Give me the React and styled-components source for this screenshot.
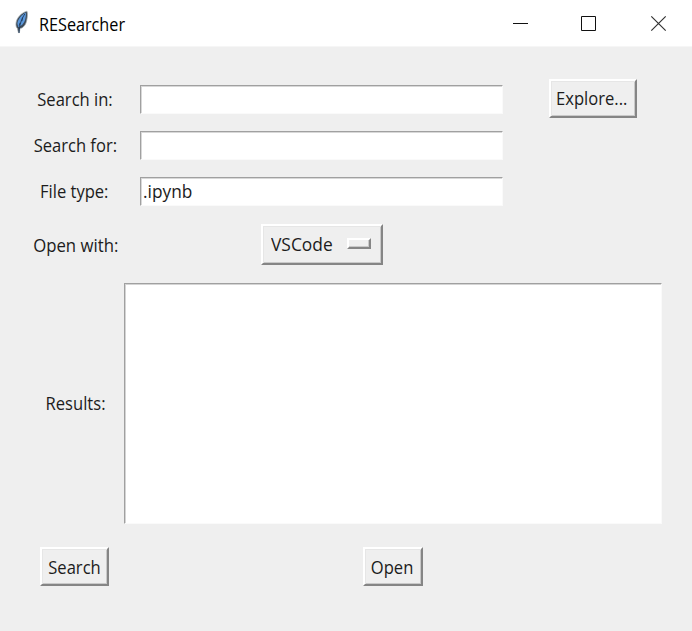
import React from "react";
import styled, { createGlobalStyle } from "styled-components";

const Global = createGlobalStyle`
  * { box-sizing: border-box; }
  body { margin: 0; background: #efefef; }
`;

const Window = styled.div`
  width: 692px;
  height: 631px;
  overflow: hidden;
  display: flex;
  flex-direction: column;
  background: #efefef;
  color: #1c1c1c;
  font: 18px/24px "Open Sans", "Noto Sans", sans-serif;
`;

const TitleBar = styled.header`
  height: 47px;
  flex: none;
  display: flex;
  align-items: flex-start;
  background: #fff;
  border-bottom: 1px solid #f6f6f6;
`;

const Feather = styled.svg`
  width: 18px;
  height: 26px;
  margin: 9px 8px 0 13px;
`;

const Title = styled.h1`
  flex: 1;
  margin: 12px 0 0;
  font-size: 18px;
  font-weight: 400;
  color: #000;
`;

const Controls = styled.div`
  display: flex;
  height: 46px;
`;

const ControlIcon = styled.svg`
  width: 69px;
  height: 46px;
  fill: none;
  stroke: ${(p) => p.$tone || "#111"};
  stroke-width: ${(p) => p.$weight || 1};
`;

const Text = styled.span`
  display: inline-block;
  white-space: nowrap;
  transform: scaleX(${(p) => p.$fit || 0.92});
  transform-origin: ${(p) => (p.$start ? "left" : "center")};
`;

const Form = styled.main`
  display: grid;
  grid-template-columns: 96px 395px 147px;
  grid-template-rows: 46px 46px 46px 61px 257px 70px;
  padding: 29px 0 0 28px;
  align-items: center;
  justify-items: center;
`;

const Label = styled.label`
  display: flex;
  justify-content: center;
  width: 96px;
  padding: 0 ${(p) => p.$shift ?? 2}px ${(p) => p.$lift || 0}px 0;
`;

const Entry = styled.div`
  width: 363px;
  height: 29px;
  display: flex;
  align-items: center;
  padding: 0 0 0 2px;
  background: #fff;
  border: 1px solid;
  border-color: #a0a0a0 #fafafa #fafafa #a0a0a0;
  box-shadow: inset 1px 1px #d8d8d8;
`;

const Button = styled.button`
  width: ${(p) => p.$width}px;
  height: ${(p) => p.$height || 39}px;
  display: flex;
  align-items: center;
  justify-content: center;
  margin: 0 0 ${(p) => p.$lift ?? 2}px;
  padding: ${(p) => p.$drop || 0}px 1px 0 0;
  background: #efefef;
  border: 2px solid;
  border-color: #fff #858585 #858585 #fff;
  box-shadow: inset 1px 1px #e6e6e6, inset -1px -1px #c9c9c9;
  font: inherit;
  color: inherit;
`;

const Picker = styled(Button)`
  justify-content: flex-start;
  padding: 0 10px 0 8px;
`;

const Indicator = styled.span`
  width: 24px;
  height: 11px;
  margin: 0 0 1px auto;
  border: 2px solid;
  border-color: #fff #868686 #868686 #fff;
  box-shadow: inset -1px -1px #c9c9c9;
`;

const Results = styled.div`
  grid-column: 2 / 4;
  justify-self: start;
  width: 538px;
  height: 241px;
  background: #fff;
  border: 1px solid;
  border-color: #a0a0a0 #fafafa #fafafa #a0a0a0;
  box-shadow: inset 1px 1px #d4d4d4;
`;

const SearchCell = styled.div`
  margin-right: 3px;
`;

const OpenCell = styled.div`
  grid-column: 2 / 4;
  justify-self: start;
  padding-left: 239px;
`;

export default function App() {
  return (
    <Window>
      <Global />
      <TitleBar>
        <Feather viewBox="0 0 18 26">
          <path d="M14 2.2C8.5 3.4 3.5 9 3 14c-.3 2.5.2 4.3 1.4 5.5l1 4.2h1l.6-4.2c3.5-.5 6-4 6.8-8.3.7-3.6 1-6.6.2-9z" fill="#3d4a58" stroke="#a4adb3" strokeWidth=".7" />
          <path d="M12.8 3.8C8.6 5.8 5 10 4.4 14.6l.8 3.4c3.2-.6 6-3.8 6.9-7.2.7-2.8 1-4.8.7-7z" fill="#5b98dc" />
          <path d="M11.8 5C8.3 10.4 6.8 14.5 6 24M9.6 8.5l-.7 3.7m-1.9 1.6-.8 3" fill="none" stroke="#1b3556" strokeWidth=".85" />
        </Feather>
        <Title><Text $start $fit={0.9}>RESearcher</Text></Title>
        <Controls>
          <ControlIcon viewBox="0 0 69 46"><path d="M28 23.5h15" /></ControlIcon>
          <ControlIcon viewBox="0 0 69 46"><path d="M27.5 16.5h14v14h-14z" /></ControlIcon>
          <ControlIcon viewBox="0 0 69 46" $tone="#333" $weight={1.2}><path d="M28.3 16.3l14.4 14.4m0-14.4L28.3 30.7" /></ControlIcon>
        </Controls>
      </TitleBar>
      <Form>
        <Label $shift={3}><Text>Search in:</Text></Label>
        <Entry />
        <Button $width={88}><Text>Explore...</Text></Button>
        <Label><Text>Search for:</Text></Label>
        <Entry />
        <span />
        <Label $shift={4}><Text>File type:</Text></Label>
        <Entry><Text $start $fit={0.96}>.ipynb</Text></Entry>
        <span />
        <Label $shift={1}><Text $fit={0.93}>Open with:</Text></Label>
        <Picker $width={122} $height={41} $lift={1}><Text $start $fit={0.965}>VSCode</Text><Indicator /></Picker>
        <span />
        <Label $lift={2} $shift={1}><Text>Results:</Text></Label>
        <Results />
        <SearchCell><Button $width={69} $drop={2}><Text>Search</Text></Button></SearchCell>
        <OpenCell><Button $width={60} $drop={2}><Text>Open</Text></Button></OpenCell>
      </Form>
    </Window>
  );
}
